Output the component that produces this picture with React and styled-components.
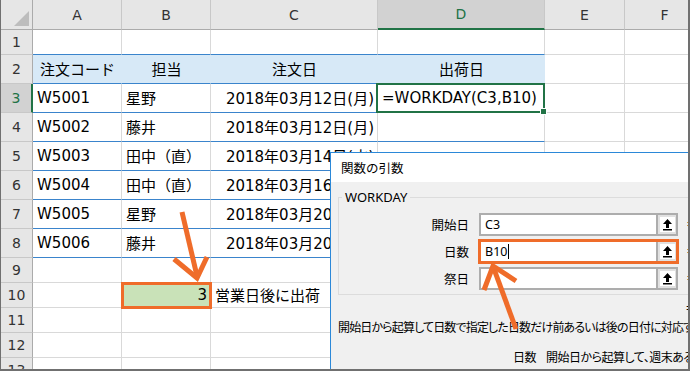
import styled, { createGlobalStyle } from 'styled-components';

const GlobalStyle = createGlobalStyle`
  html, body {
    margin: 0;
    padding: 0;
    background: #fff;
  }
  body {
    font-family: "DejaVu Sans", "Noto Sans CJK JP", sans-serif;
  }
`;

const Frame = styled.div`
  position: relative;
  width: 690px;
  height: 371px;
  box-sizing: border-box;
  border-left: 1px solid #707070;
  border-right: 2px solid #707070;
  border-bottom: 2px solid #707070;
  overflow: hidden;
  background: #fff;
`;

const Sheet = styled.div`
  display: grid;
  grid-template-columns: 32px 89px 89px 167px 167px 80px 80px;
  grid-template-rows: 30px 25px repeat(7, 29px) repeat(5, 25px);
  font-size: 15px;
  color: #000;
`;

const Corner = styled.div`
  position: relative;
  background: #e6e6e6;
  border-right: 1px solid #ababab;
  border-bottom: 1px solid #ababab;
  box-sizing: border-box;
  &::after {
    content: "";
    position: absolute;
    right: 3px;
    bottom: 3px;
    width: 15px;
    height: 15px;
    background: #bdbdbd;
    clip-path: polygon(100% 0, 100% 100%, 0 100%);
  }
`;

const ColHead = styled.div`
  display: flex;
  align-items: center;
  justify-content: center;
  box-sizing: border-box;
  font-size: 14px;
  background: ${({ $active }) => ($active ? '#d2d2d2' : '#e6e6e6')};
  color: ${({ $active }) => ($active ? '#217346' : '#333')};
  border-right: 1px solid #c8c8c8;
  border-bottom: ${({ $active }) => ($active ? '2px solid #217346' : '1px solid #ababab')};
`;

const RowHead = styled.div`
  display: flex;
  align-items: center;
  justify-content: center;
  box-sizing: border-box;
  font-size: 14px;
  background: ${({ $active }) => ($active ? '#d2d2d2' : '#e6e6e6')};
  color: ${({ $active }) => ($active ? '#217346' : '#333')};
  border-right: ${({ $active }) => ($active ? '2px solid #217346' : '1px solid #ababab')};
  border-bottom: 1px solid #c8c8c8;
`;

const justify = { left: 'flex-start', center: 'center', right: 'flex-end' };

const Cell = styled.div`
  position: relative;
  display: flex;
  align-items: center;
  justify-content: ${({ $align }) => justify[$align || 'left']};
  box-sizing: border-box;
  padding: 0 3px 1px 4px;
  min-width: 0;
  white-space: nowrap;
  background: ${({ $fill }) => $fill || '#fff'};
  border-right: 1px solid ${({ $fill }) => $fill || '#d9d9d9'};
  border-bottom: 1px solid ${({ $rule }) => ($rule ? '#3a84cc' : '#d9d9d9')};

  ${({ $mark }) =>
    $mark &&
    `
    z-index: 1;
    outline: 3px solid #ef6c2a;
    outline-offset: -2px;
  `}

  ${({ $selected }) =>
    $selected &&
    `
    z-index: 2;
    &::after {
      content: "";
      position: absolute;
      left: -2px;
      top: -1px;
      right: -1px;
      bottom: -1px;
      border: 2px solid #217346;
    }
    &::before {
      content: "";
      position: absolute;
      right: -3px;
      bottom: -3px;
      width: 5px;
      height: 5px;
      background: #217346;
      border: 1px solid #fff;
      z-index: 3;
    }
  `}
`;

/* dialog */

const Dialog = styled.div`
  position: absolute;
  left: 329px;
  top: 152px;
  width: 420px;
  height: 240px;
  border: 1px solid #2b88d8;
  background: #f0f0f0;
  font-family: "Noto Sans", "Noto Sans CJK JP", sans-serif;
  font-size: 12px;
  color: #000;
  z-index: 5;
`;

const TitleBar = styled.div`
  height: 29px;
  display: flex;
  align-items: center;
  padding-left: 10px;
  background: #fff;
  font-size: 12.5px;
`;

const Body = styled.div`
  padding: 7px 0 0 7px;
`;

const Group = styled.fieldset`
  margin: 0;
  padding: 8px 0 4px 0;
  border: 1px solid #dcdcdc;
  min-width: 0;
`;

const GroupTitle = styled.legend`
  margin-left: 3px;
  padding: 0 3px;
  font-size: 13px;
  line-height: 16px;
`;

const ArgList = styled.div`
  display: flex;
  flex-direction: column;
  gap: 4px;
`;

const ArgRow = styled.div`
  display: grid;
  grid-template-columns: 130px 199px 20px;
  column-gap: 10px;
  align-items: center;
  height: 23px;
  & > :last-child {
    margin-left: -1px;
  }
`;

const ArgLabel = styled.div`
  text-align: right;
  font-size: 12.5px;
`;

const RefEdit = styled.div`
  display: flex;
  height: 23px;
  box-sizing: border-box;
  border: 2px solid #adadad;
  background: #fff;
  ${({ $mark }) => $mark && 'outline: 3px solid #ef6c2a; outline-offset: -2px;'}
`;

const RefText = styled.div`
  flex: 1;
  display: flex;
  align-items: center;
  padding-left: 4px;
  font-size: 12.5px;
`;

const Caret = styled.span`
  display: inline-block;
  width: 1px;
  height: 15px;
  margin-left: 1px;
  background: #000;
`;

const RefButton = styled.div`
  width: 20px;
  box-sizing: border-box;
  display: flex;
  align-items: center;
  justify-content: center;
  background: #e1e1e1;
  border-left: 2px solid #adadad;
`;

const IconBox = styled.div`
  width: 15px;
  height: 15px;
  background: #fff;
  display: flex;
`;

const Equals = styled.div`
  font-size: 12px;
`;

const ResultRow = styled.div`
  display: grid;
  grid-template-columns: 130px 199px 20px;
  column-gap: 10px;
  height: 16px;
  margin-top: 5px;
  & > :last-child {
    margin-left: -1px;
  }
`;

const Description = styled.div`
  margin-top: 4px;
  line-height: 16px;
  white-space: nowrap;
  font-feature-settings: "palt";
  letter-spacing: -0.85px;
`;

const ArgHelp = styled.div`
  display: flex;
  margin: 14px 0 0 175px;
  line-height: 16px;
  white-space: nowrap;
  font-feature-settings: "palt";
  letter-spacing: -0.5px;
`;

const ArgHelpName = styled.span`
  width: 33px;
  flex: none;
`;

const Overlay = styled.svg`
  position: absolute;
  left: -1px;
  top: 0;
  z-index: 10;
  pointer-events: none;
`;

const UpIcon = () => (
  <svg width="15" height="15" viewBox="0 0 15 15">
    <polygon points="7.5,2 3,7 6,7 6,11 9,11 9,7 12,7" fill="#000" />
    <rect x="3" y="12" width="9" height="1.5" fill="#000" />
  </svg>
);

const columns = ['A', 'B', 'C', 'D', 'E', 'F'];

const orders = [
  ['W5001', '星野', '2018年03月12日(月)'],
  ['W5002', '藤井', '2018年03月12日(月)'],
  ['W5003', '田中（直）', '2018年03月14日(水)'],
  ['W5004', '田中（直）', '2018年03月16日(金)'],
  ['W5005', '星野', '2018年03月20日(火)'],
  ['W5006', '藤井', '2018年03月20日(火)'],
];

const HEAD_FILL = '#d7e9f7';

const args = [
  { label: '開始日', value: 'C3' },
  { label: '日数', value: 'B10', mark: true },
  { label: '祭日', value: '' },
];

const App = () => {
  const blank = (n) => [
    <RowHead key={`h${n}`}>{n}</RowHead>,
    ...columns.map((c) => <Cell key={`${c}${n}`} />),
  ];

  return (
    <Frame>
      <GlobalStyle />
      <Sheet>
        <Corner />
        {columns.map((c) => (
          <ColHead key={c} $active={c === 'D'}>{c}</ColHead>
        ))}

        <RowHead>1</RowHead>
        {columns.map((c, i) => (
          <Cell key={`${c}1`} $rule={i < 4} />
        ))}

        <RowHead>2</RowHead>
        {['注文コード', '担当', '注文日', '出荷日'].map((t) => (
          <Cell key={t} $align="center" $fill={HEAD_FILL} $rule>
            {t}
          </Cell>
        ))}
        <Cell />
        <Cell />

        {orders.map(([code, person, date], i) => {
          const n = i + 3;
          return [
            <RowHead key={`h${n}`} $active={n === 3}>{n}</RowHead>,
            <Cell key={`A${n}`} $rule>{code}</Cell>,
            <Cell key={`B${n}`} $rule>{person}</Cell>,
            <Cell key={`C${n}`} $rule $align="right">{date}</Cell>,
            <Cell key={`D${n}`} $rule $selected={n === 3}>
              {n === 3 ? '=WORKDAY(C3,B10)' : ''}
            </Cell>,
            <Cell key={`E${n}`} />,
            <Cell key={`F${n}`} />,
          ];
        })}

        {blank(9)}

        <RowHead>10</RowHead>
        <Cell />
        <Cell $align="right" $fill="#c9e2b8" $mark>3</Cell>
        <Cell>営業日後に出荷</Cell>
        <Cell />
        <Cell />
        <Cell />

        {blank(11)}
        {blank(12)}
        {blank(13)}
      </Sheet>

      <Dialog>
        <TitleBar>関数の引数</TitleBar>
        <Body>
          <Group>
            <GroupTitle>WORKDAY</GroupTitle>
            <ArgList>
              {args.map((a) => (
                <ArgRow key={a.label}>
                  <ArgLabel>{a.label}</ArgLabel>
                  <RefEdit $mark={a.mark}>
                    <RefText>
                      {a.value}
                      {a.mark && <Caret />}
                    </RefText>
                    <RefButton>
                      <IconBox>
                        <UpIcon />
                      </IconBox>
                    </RefButton>
                  </RefEdit>
                  <Equals>=</Equals>
                </ArgRow>
              ))}
            </ArgList>
          </Group>
          <ResultRow>
            <span />
            <span />
            <Equals>=</Equals>
          </ResultRow>
          <Description>
            開始日から起算して日数で指定した日数だけ前あるいは後の日付に対応するシリアル値を返します。
          </Description>
          <ArgHelp>
            <ArgHelpName>日数</ArgHelpName>
            <span>開始日から起算して、週末あるいは祭日を除く前または後の日数を指定します。</span>
          </ArgHelp>
        </Body>
      </Dialog>

      <Overlay width="692" height="371" viewBox="0 0 692 371">
        <g fill="none" stroke="#ef6c2a" strokeWidth="5" strokeLinejoin="miter">
          <line x1="182" y1="212" x2="197" y2="276" />
          <polyline points="174,259 197,278 207,257" />
          <line x1="516" y1="329" x2="494" y2="269" />
          <polyline points="484,290 493,266 516,281" />
        </g>
      </Overlay>
    </Frame>
  );
};

export default App;
